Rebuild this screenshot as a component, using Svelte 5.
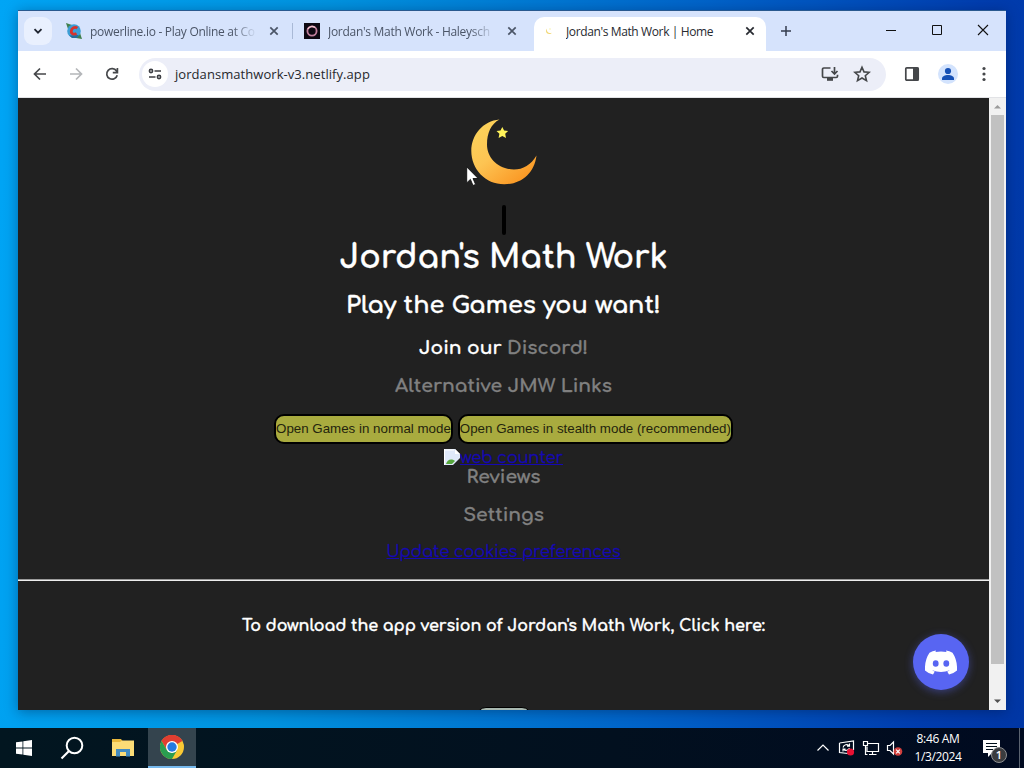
<script>
  const tabs = [
    { title: 'powerline.io - Play Online at Co', icon: 'power', active: false },
    { title: "Jordan's Math Work - Haleysch", icon: 'ring', active: false },
    { title: "Jordan's Math Work | Home", icon: 'moon', active: true }
  ]

  let url = 'jordansmathwork-v3.netlify.app'
  let time = '8:46 AM'
  let date = '1/3/2024'
  let notifications = 1
</script>

<div class="desktop">
  <div class="window">
    <div class="tab-strip">
      <button class="tab-search" aria-label="Search tabs">
        <svg width="12" height="12" viewBox="0 0 12 12"><path d="M2.5 4.2 6 7.7l3.5-3.5" fill="none" stroke="#1f2430" stroke-width="1.8" /></svg>
      </button>
      {#each tabs as tab}
        <div class="tab" class:active={tab.active}>
          <svg class="favicon" width="16" height="16" viewBox="0 0 16 16">
            {#if tab.icon === 'power'}
              <path d="M0 0l6 2-4 4zM16 16l-6-1 4-5z" fill="#3f7f4c" />
              <circle cx="8" cy="8" r="6.8" fill="#3c9fd6" />
              <path d="M3 12.5 6 15h5l2-3z" fill="#246d9c" />
              <path d="M11.3 5.2C9 3.4 5.6 5 5.3 8c-.2 3 2.6 4 5.2 2.4" fill="none" stroke="#d8322b" stroke-width="2.8" />
            {:else if tab.icon === 'ring'}
              <rect width="16" height="16" fill="#0d0812" />
              <circle cx="8" cy="8" r="4.6" fill="none" stroke="#c07e9c" stroke-width="1.8" />
              <path d="M4 6a4.6 4.6 0 0 1 7-1.5" fill="none" stroke="#f0c3cd" stroke-width="1.4" />
            {:else}
              <path d="M5 5.5c-.8 3 1.5 5.3 5 4.3-1.8 2.200-6 1.400-6-1.700 0-1.100.3-1.900 1-2.600z" fill="#f1d774" />
              <circle cx="8" cy="6" r=".7" fill="#f3ef9a" />
            {/if}
          </svg>
          <span class="tab-title">{tab.title}</span>
          <svg class="tab-close" width="10" height="10" viewBox="0 0 10 10"><path d="M1.3 1.3l7.4 7.4M8.7 1.3 1.3 8.7" stroke="currentColor" stroke-width="1.7" /></svg>
        </div>
      {/each}
      <svg class="new-tab" width="12" height="12" viewBox="0 0 12 12"><path d="M6 1v10M1 6h10" stroke="#353d4d" stroke-width="1.5" /></svg>
      <div class="window-controls">
        <svg width="12" height="12" viewBox="0 0 12 12"><path d="M1 6.5h10" stroke="#111" /></svg>
        <svg width="12" height="12" viewBox="0 0 12 12"><path d="M1.5 1.5h9v9h-9z" fill="none" stroke="#111" /></svg>
        <svg width="12" height="12" viewBox="0 0 12 12"><path d="M1 1l10 10M11 1 1 11" stroke="#111" stroke-width="1.1" /></svg>
      </div>
    </div>

    <div class="toolbar">
      <svg class="nav" width="16" height="16" viewBox="0 0 16 16"><path d="M14 8H3M8 2.5 2.5 8 8 13.5" fill="none" stroke="#45474a" stroke-width="1.7" /></svg>
      <svg class="nav" width="16" height="16" viewBox="0 0 16 16"><path d="M2 8h11M8 2.5 13.5 8 8 13.5" fill="none" stroke="#b4b6b9" stroke-width="1.7" /></svg>
      <svg class="nav" width="16" height="16" viewBox="0 0 16 16"><path d="M13.2 9.2A5.3 5.3 0 1 1 12.5 5L13 6M13.4 2v4.700H8.800" fill="none" stroke="#45474a" stroke-width="1.7" /></svg>
      <div class="omnibox">
        <div class="site-info">
          <svg width="14" height="12" viewBox="0 0 14 12"><g fill="none" stroke="#3b3d42" stroke-width="1.6"><circle cx="3" cy="3" r="1.6" /><path d="M6.5 3H13M1 9h6.5" /><circle cx="11" cy="9" r="1.6" /></g></svg>
        </div>
        <span class="url">{url}</span>
        <svg width="18" height="16" viewBox="0 0 18 16"><path d="M9.5 2H2.8C2 2 1.5 2.5 1.5 3.2v7c0 .8.5 1.3 1.3 1.3h12.4c.8 0 1.3-.5 1.3-1.3V8.8M13.5 1v6.5M10.500 5l3 3 3-3" fill="none" stroke="#45474a" stroke-width="1.7" /><path d="M6 12h6v2.8H6z" fill="#45474a" /></svg>
        <svg width="18" height="18" viewBox="0 0 18 18"><path d="M9 2.2l2 4.7 5.2.4-3.9 3.4 1.2 5L9 13l-4.5 2.7 1.2-5-3.9-3.4L7 6.9z" fill="none" stroke="#45474a" stroke-width="1.6" /></svg>
      </div>
      <svg class="side-panel" width="16" height="16" viewBox="0 0 16 16"><rect x="1.8" y="1.8" width="12.4" height="12.4" rx="1" fill="none" stroke="#45474a" stroke-width="1.7" /><path d="M9 1.5h5.5v13H9z" fill="#45474a" /></svg>
      <svg class="avatar" width="20" height="20" viewBox="0 0 20 20"><circle cx="10" cy="10" r="10" fill="#d3e3fd" /><circle cx="10" cy="7" r="3.1" fill="#1550b5" /><path d="M4 16v-1.5c0-2.3 3-3.5 6-3.5s6 1.2 6 3.5V16z" fill="#1550b5" /></svg>
      <svg class="menu" width="4" height="16" viewBox="0 0 4 16" fill="#45474a"><circle cx="2" cy="2.5" r="1.6" /><circle cx="2" cy="8" r="1.6" /><circle cx="2" cy="13.5" r="1.6" /></svg>
    </div>

    <div class="viewport">
      <main>
        <svg class="moon" width="66" height="66" viewBox="0 0 66 66">
          <defs>
            <linearGradient id="moonFill" x1="0" y1="0" x2="0.8" y2="1">
              <stop offset="0" stop-color="#fbd65c" />
              <stop offset="0.5" stop-color="#fdc453" />
              <stop offset="1" stop-color="#fa9420" />
            </linearGradient>
          </defs>
          <path d="M28.5.6C12 2 .3 16 .3 32c0 18 14 33.3 33 33.300 17 0 30-11 32.200-28.800C60 46 52 50.500 43 50.500 27 50 16 39 16 25.500 16 14 20 5 28.500.6z" fill="url(#moonFill)" />
          <path d="M31.3 8l1.8 3.500 4 .5-2.900 2.800.8 4.100-3.700-1.900-3.700 1.900.8-4.100-2.900-2.800 4-.5z" fill="#fff35a" />
        </svg>
        <div class="bar"></div>
        <h1>Jordan's Math Work</h1>
        <h2>Play the Games you want!</h2>
        <h3 class="join">Join our <a href="#discord">Discord!</a></h3>
        <h3 class="alt-links"><a href="#links">Alternative JMW Links</a></h3>
        <div class="modes">
          <button>Open Games in normal mode</button>
          <button>Open Games in stealth mode (recommended)</button>
        </div>
        <a class="counter" href="#counter">
          <svg width="16" height="16" viewBox="0 0 16 16"><path d="M0 0h11l5 5v4L9 16H0z" fill="#dfe9fa" /><path d="M11 0v5h5z" fill="#fff" /><path d="M0 1h10M.5 0v16" stroke="#fff" /><path d="M2 15c1-4 5-6 9-3l-3 3z" fill="#56a63c" /></svg><span>web counter</span>
        </a>
        <h3 class="reviews"><a href="#reviews">Reviews</a></h3>
        <h3 class="settings"><a href="#settings">Settings</a></h3>
        <a class="cookies" href="#cookies">Update cookies preferences</a>
        <hr />
        <h4>To download the app version of Jordan's Math Work, Click here:</h4>
        <div class="download"></div>
      </main>
      <div class="scrollbar">
        <svg width="17" height="17" viewBox="0 0 17 17"><path d="M5 10.5 8.5 7l3.5 3.5z" fill="#9b9b9b" /></svg>
        <div class="thumb"></div>
        <svg class="down" width="17" height="17" viewBox="0 0 17 17"><path d="M5 6.5 8.5 10 12 6.5z" fill="#505050" /></svg>
      </div>
      <div class="discord">
        <svg width="32" height="25" viewBox="0 0 32 25"><path d="M11 .5 10.5 2q5.5-1 11 0L21 .5q3.5.5 6.5 2.2Q32.5 10 32 20.5q-3.3 3-8 4l-1.8-3q1.6-.5 2.6-1.3-8.8 3.6-17.6 0 1 .8 2.6 1.3l-1.8 3q-4.7-1-8-4Q-.5 10 4.5 2.7 7.5 1 11 .5z" fill="#fff" /><ellipse cx="10.7" cy="13.5" rx="2.9" ry="3.2" fill="#5865f2" /><ellipse cx="21.3" cy="13.5" rx="2.9" ry="3.2" fill="#5865f2" /></svg>
      </div>
    </div>
  </div>

  <svg class="cursor" width="13" height="21" viewBox="0 0 13 21"><path d="M.7.9v16l3.7-3.5L7 19.5l2.6-1.1L7 12.5h5.2z" fill="#fff" stroke="#111" stroke-width=".9" /></svg>

  <div class="taskbar">
    <div class="task">
      <svg width="16" height="16" viewBox="0 0 16 16" fill="#fff"><path d="M0 2.3 6.5 1.4v6.2H0zM7.3 1.3 16 0v7.6H7.3zM0 8.4h6.5v6.2L0 13.7zM7.3 8.4H16V16l-8.7-1.3z" /></svg>
    </div>
    <div class="task">
      <svg width="24" height="24" viewBox="0 0 24 24"><circle cx="14.5" cy="9.5" r="7.8" fill="none" stroke="#fff" stroke-width="2" /><path d="M9 15l-7.5 7.5" stroke="#fff" stroke-width="2.2" /></svg>
    </div>
    <div class="task files">
      <svg width="22" height="18" viewBox="0 0 22 18"><path d="M0 0h9l1.5 2H22v15H0z" fill="#e9b83c" /><path d="M0 3h8l2-1.5h12V17H0z" fill="#fbdc76" /><path d="M4 10h14v7.5h-4V13H8v4.5H4z" fill="#428bc0" /></svg>
    </div>
    <div class="task running">
      <svg width="24" height="24" viewBox="0 0 24 24"><circle cx="12" cy="12" r="12" fill="#fac934" /><path d="M12 12 1.6 6A12 12 0 0 1 22.4 6z" fill="#e03e31" /><path d="M12 6h10.4A12 12 0 0 0 1.6 6l5.2 9z" fill="#e03e31" /><path d="M1.6 6A12 12 0 0 0 12 24l5.2-9-5.2 3-5.2-3z" fill="#2a9d50" /><circle cx="12" cy="12" r="6" fill="#fff" /><circle cx="12" cy="12" r="4.7" fill="#267ae0" /></svg>
    </div>
    <div class="tray">
      <svg width="14" height="8" viewBox="0 0 14 8"><path d="M1.5 6.5 7 1l5.5 5.5" fill="none" stroke="#fff" stroke-width="1.2" /></svg>
      <svg width="18" height="16" viewBox="0 0 18 16"><path d="M1.5 3 15.5 1v9M10 13.5l-8.5-1V3" fill="none" stroke="#fff" stroke-width="1.2" /><path d="M5 7.5C6 4.5 9 4 11 5.5M11.5 3.5v2.600H9M11.5 8c-1 2.5-4 3-6 1.5M5 11.5V9h2.5" fill="none" stroke="#fff" stroke-width="1.1" /><circle cx="12.5" cy="12" r="3.6" fill="#e81133" /></svg>
      <svg width="18" height="16" viewBox="0 0 18 16"><path d="M6 3.5h10.5v8H5v-5M10.5 11.5V14M7 14.5h7.5M1.5 1.5h4v4h-4zM3.5 5.5v9h2" fill="none" stroke="#fff" stroke-width="1.2" /></svg>
      <svg width="18" height="16" viewBox="0 0 18 16"><path d="M1.5 5.5H4l3.5-3.5v12L4 10.5H1.5z" fill="none" stroke="#fff" stroke-width="1.2" /><circle cx="12" cy="11.5" r="4.3" fill="#d13f3d" /><path d="M10.2 9.700l3.600 3.600M13.800 9.700l-3.600 3.600" stroke="#fff" stroke-width="1.2" /></svg>
      <div class="clock">
        <span class="time">{time}</span>
        <span class="date">{date}</span>
      </div>
      <div class="action-center">
        <svg width="18" height="17" viewBox="0 0 18 17"><path d="M0 0h17v13H9l-4 4v-4H0z" fill="#fff" /><path d="M3 3.5h11M3 6.5h11M3 9.5h7" stroke="#02101c" stroke-width="1.2" /></svg>
        <span class="badge">{notifications}</span>
      </div>
      <div class="show-desktop"></div>
    </div>
  </div>
</div>

<style>
  :global(body) {
    margin: 0;
    overflow: hidden;
  }
  .desktop {
    position: relative;
    box-sizing: border-box;
    display: flex;
    flex-direction: column;
    justify-content: space-between;
    width: 1024px;
    height: 768px;
    padding-top: 10px;
    background: linear-gradient(95deg, #00a5f5 0%, #0093df 30%, #0063c9 65%, #003daf 90%, #0036a4 100%);
    font-family: 'Open Sans', 'Noto Sans', sans-serif;
  }
  .window {
    box-sizing: border-box;
    display: flex;
    flex-direction: column;
    width: 988px;
    height: 700px;
    margin-left: 18px;
    border-top: 1px solid #29598f;
    box-shadow: 0 2px 12px rgba(0, 20, 60, 0.4);
  }
  svg {
    display: block;
    flex: none;
  }
  .tab-strip {
    display: flex;
    align-items: center;
    height: 40px;
    background: #d6e3fc;
  }
  .tab-search {
    display: flex;
    align-items: center;
    justify-content: center;
    width: 28px;
    height: 28px;
    margin: 0 2px 0 6px;
    padding: 0;
    border: 0;
    border-radius: 9px;
    background: #e9f0fe;
  }
  .tab {
    position: relative;
    box-sizing: border-box;
    display: flex;
    align-items: center;
    width: 238px;
    height: 40px;
    padding: 0 14px 0 12px;
    color: #4b5567;
  }
  .tab:first-of-type::after {
    content: '';
    position: absolute;
    right: -1px;
    width: 1px;
    height: 16px;
    background: #a9b9d6;
  }
  .favicon {
    margin-right: 8px;
  }
  .tab-title {
    flex: none;
    width: 167px;
    margin-right: 12px;
    overflow: hidden;
    white-space: nowrap;
    font-size: 12px;
    letter-spacing: -0.29px;
    -webkit-mask-image: linear-gradient(90deg, #000 142px, transparent 167px);
    mask-image: linear-gradient(90deg, #000 142px, transparent 167px);
  }
  .tab.active {
    z-index: 0;
    color: #272a30;
  }
  .tab.active::before {
    content: '';
    position: absolute;
    z-index: -1;
    inset: 6px 2px 0 4px;
    border-radius: 10px 10px 0 0;
    background: #fff;
  }
  .tab.active .tab-title {
    letter-spacing: -0.38px;
    -webkit-mask-image: none;
    mask-image: none;
  }
  .new-tab {
    margin-left: 12px;
  }
  .window-controls {
    display: flex;
    gap: 34px;
    margin: 0 17px 2px auto;
  }
  .toolbar {
    display: flex;
    align-items: center;
    height: 46px;
    border-bottom: 1px solid #e2e3e6;
    background: #fff;
  }
  .nav {
    margin-left: 20px;
  }
  .nav:first-child {
    margin-left: 14px;
  }
  .omnibox {
    box-sizing: border-box;
    display: flex;
    align-items: center;
    gap: 14px;
    width: 747px;
    height: 33px;
    margin-left: 19px;
    padding: 0 15px 0 3px;
    border-radius: 17px;
    background: #eceef8;
  }
  .site-info {
    display: flex;
    align-items: center;
    justify-content: center;
    width: 26px;
    height: 26px;
    margin-right: -7px;
    border-radius: 50%;
    background: #fff;
  }
  .url {
    margin-right: auto;
    color: #26282d;
    font-size: 13px;
    letter-spacing: 0.06px;
  }
  .side-panel {
    margin-left: 18px;
  }
  .avatar {
    margin-left: 18px;
  }
  .menu {
    margin-left: 24px;
  }
  .viewport {
    position: relative;
    display: flex;
    height: 612px;
  }
  main {
    display: flex;
    flex-direction: column;
    align-items: center;
    width: 971px;
    overflow: hidden;
    background: #212121;
    color: #fff;
    font-family: Comfortaa, Lato, 'Open Sans', sans-serif;
    white-space: nowrap;
  }
  .moon {
    margin-top: 21px;
  }
  .bar {
    flex: none;
    width: 4px;
    height: 30px;
    margin-top: 20px;
    border-radius: 2px;
    background: #000;
  }
  h1,
  h2,
  h3,
  h4 {
    margin: 0;
    font-weight: 700;
    -webkit-text-stroke: 0.3px currentColor;
  }
  h1 {
    margin-top: 3px;
    font-size: 32px;
    line-height: 40px;
  }
  h2 {
    margin-top: 10px;
    font-size: 24px;
    line-height: 36px;
  }
  h3 {
    font-size: 18.72px;
    line-height: 30px;
  }
  h3 a {
    color: #808080;
    text-decoration: none;
  }
  .join {
    margin-top: 9px;
  }
  .alt-links {
    margin-top: 8px;
  }
  .modes {
    display: flex;
    flex: none;
    gap: 5px;
    margin-top: 13px;
  }
  .modes button {
    height: 30px;
    padding: 0 0 1px;
    border: 2px solid #000;
    border-radius: 10px;
    background: #a9ab3f;
    color: #24240d;
    font: 13.333px 'Liberation Sans', Arial, sans-serif;
  }
  .counter {
    display: flex;
    flex: none;
    height: 19px;
    margin-top: 5px;
    color: #1508b4;
    font-size: 16px;
    line-height: 18px;
  }
  .counter span {
    height: 17px;
    text-decoration: underline;
  }
  .reviews {
    line-height: 19px;
  }
  .settings {
    margin-top: 13px;
  }
  .cookies {
    margin-top: 7px;
    color: #1508b4;
    font-size: 16px;
    line-height: 30px;
  }
  .counter,
  .cookies {
    -webkit-text-stroke: 0.3px currentColor;
  }
  hr {
    box-sizing: border-box;
    flex: none;
    width: 100%;
    height: 2px;
    margin: 12px 0 0;
    border: 0;
    border-top: 1px solid #9a9a9a;
    background: #eee;
  }
  h4 {
    margin-top: 30px;
    font-size: 16px;
    line-height: 30px;
    letter-spacing: -0.06px;
  }
  .download {
    box-sizing: border-box;
    flex: none;
    width: 56px;
    height: 30px;
    margin-top: 66px;
    border: 1px solid #000;
    border-radius: 10px;
    background: #a8b8b0;
  }
  .scrollbar {
    display: flex;
    flex-direction: column;
    width: 17px;
    background: #f1f1f1;
  }
  .thumb {
    width: 13px;
    height: 549px;
    margin-left: 2px;
    background: #c1c1c1;
  }
  .down {
    margin-top: auto;
  }
  .discord {
    position: absolute;
    right: 37px;
    bottom: 20px;
    display: flex;
    align-items: center;
    justify-content: center;
    width: 56px;
    height: 56px;
    border-radius: 50%;
    background: #5865f2;
    box-shadow: 0 2px 8px rgba(88, 101, 242, 0.45);
  }
  .cursor {
    position: absolute;
    left: 466px;
    top: 166px;
  }
  .taskbar {
    display: flex;
    height: 40px;
    background: linear-gradient(90deg, #021620, #02101f 60%, #000a20);
    color: #fff;
  }
  .task {
    box-sizing: border-box;
    display: flex;
    align-items: center;
    justify-content: center;
    width: 48px;
    height: 40px;
  }
  .task.files {
    width: 52px;
    padding-left: 2px;
  }
  .task.running {
    border-bottom: 2px solid #76b9ed;
    background: #34444e;
  }
  .tray {
    display: flex;
    align-items: center;
    margin-left: auto;
  }
  .tray > svg {
    margin-right: 6px;
  }
  .tray > svg:first-child {
    margin-right: 8px;
  }
  .clock {
    display: flex;
    flex-direction: column;
    align-items: center;
    width: 60px;
    margin: 0 15px 0 -2px;
    font-size: 12px;
    line-height: 18px;
    letter-spacing: -0.35px;
    white-space: nowrap;
  }
  .action-center {
    position: relative;
    margin-right: 18px;
  }
  .badge {
    position: absolute;
    left: 8px;
    top: 7px;
    box-sizing: border-box;
    width: 16px;
    height: 16px;
    border: 1px solid #8d8f91;
    border-radius: 50%;
    background: #3a3c3f;
    font-size: 11px;
    font-weight: 600;
    line-height: 14px;
    text-align: center;
  }
  .show-desktop {
    width: 4px;
    height: 40px;
    border-left: 1px solid #5a6370;
  }
</style>
